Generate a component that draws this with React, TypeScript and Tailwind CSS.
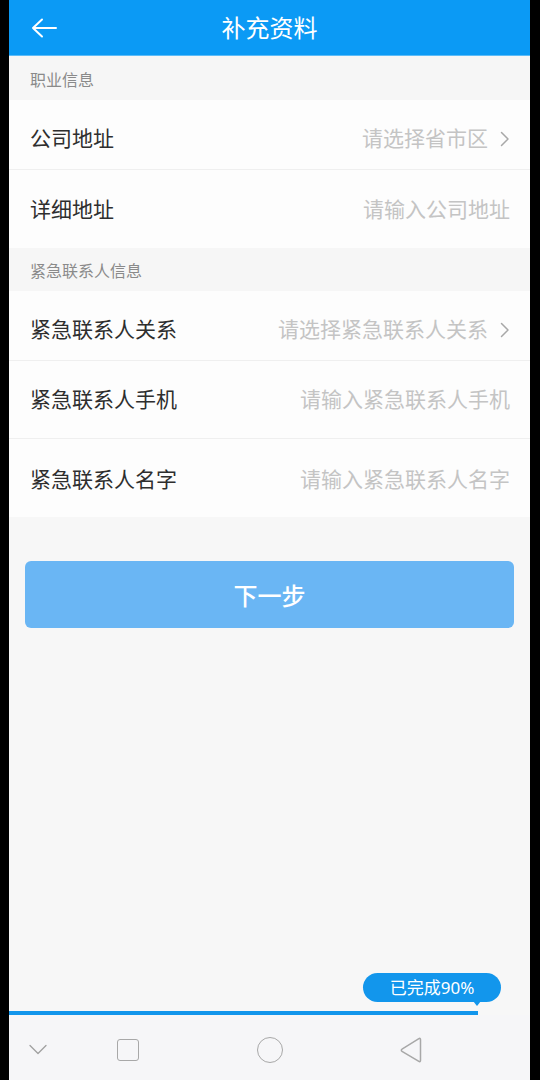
import React from 'react';

// Supplementary info form: occupation address + emergency contact, with a progress badge.

type Field = {
  label: string;
  placeholder: string;
  select?: boolean;
  height: string;
};

const workFields: Field[] = [
  { label: '公司地址', placeholder: '请选择省市区', select: true, height: 'h-[70px] pt-[8px]' },
  { label: '详细地址', placeholder: '请输入公司地址', height: 'h-[78px]' },
];

const contactFields: Field[] = [
  { label: '紧急联系人关系', placeholder: '请选择紧急联系人关系', select: true, height: 'h-[70px] pt-[8px]' },
  { label: '紧急联系人手机', placeholder: '请输入紧急联系人手机', height: 'h-[78px]' },
  { label: '紧急联系人名字', placeholder: '请输入紧急联系人名字', height: 'h-[78px] pt-[2px]' },
];

function Chevron() {
  return (
    <svg width="10" height="16" viewBox="0 0 10 16" fill="none" className="ml-[12px]">
      <path d="M1.5 1.5L8 8l-6.5 6.5" stroke="#a8a8a8" strokeWidth="1.5" strokeLinecap="round" strokeLinejoin="round" />
    </svg>
  );
}

function SectionTitle({ children, height }: { children: React.ReactNode; height: string }) {
  return (
    <div className={`${height} flex items-center bg-[#f6f6f6] pl-[21px] pt-[3px] text-[16px] leading-none text-[#8a8a8a]`}>
      {children}
    </div>
  );
}

function FieldGroup({ fields }: { fields: Field[] }) {
  return (
    <div className="bg-[#fdfdfd]">
      {fields.map((f, i) => (
        <div
          key={f.label}
          className={`${f.height} flex items-center justify-between pl-[21px] pr-[20px] ${
            i < fields.length - 1 ? 'border-b border-[#efefef]' : ''
          }`}
        >
          <span className="text-[21px] leading-none text-[#2e2e2e]">{f.label}</span>
          <span className="flex items-center">
            <span className="text-[21px] leading-none text-[#c4c4c4]">{f.placeholder}</span>
            {f.select && <Chevron />}
          </span>
        </div>
      ))}
    </div>
  );
}

export default function App() {
  return (
    <div className="flex h-[1080px] w-[540px] bg-black pl-[9px] pr-[10px] font-['Noto_Sans','Noto_Sans_CJK_SC',sans-serif]">
      <div className="flex w-[521px] flex-col bg-[#f7f7f7]">
        {/* Header */}
        <div className="relative flex h-[56px] items-center justify-center border-b border-[#5cbcf8] bg-[#0b9af5]">
          <svg
            width="26"
            height="20"
            viewBox="0 0 26 20"
            fill="none"
            className="absolute left-[22px] top-[18px]"
          >
            <path d="M25 10H2M11 1.5L2 10l9 8.5" stroke="white" strokeWidth="2" strokeLinecap="round" strokeLinejoin="round" />
          </svg>
          <span className="text-[24px] leading-none text-white">补充资料</span>
        </div>

        <SectionTitle height="h-[44px]">职业信息</SectionTitle>
        <FieldGroup fields={workFields} />

        <SectionTitle height="h-[43px]">紧急联系人信息</SectionTitle>
        <FieldGroup fields={contactFields} />

        <div className="px-[16px] pt-[44px]">
          <button
            type="button"
            className="flex h-[67px] w-full items-center justify-center rounded-[6px] bg-[#6ab6f4] pt-[2px] text-[24px] font-medium leading-none text-white"
          >
            下一步
          </button>
        </div>

        <div className="flex-1" />

        {/* Progress badge + bar */}
        <div className="flex flex-col">
          <div className="flex justify-end pr-[29px]">
            <div className="relative flex h-[29px] w-[138px] items-center justify-center rounded-full bg-[#1296ec] text-[17px] leading-none text-white">
              已完成90%
              <span className="absolute bottom-[-4px] right-[20px] h-0 w-0 border-x-[4px] border-t-[5px] border-x-transparent border-t-[#1296ec]" />
            </div>
          </div>
          <div className="mt-[9px] h-[4px] w-[469px] bg-[#1296ec]" />
        </div>

        {/* System nav bar */}
        <div className="flex h-[65px] items-center bg-[#f6f6f8] pt-[4px]">
          <div className="flex w-full items-center">
            <div className="flex w-[58px] justify-center">
              <svg width="18" height="11" viewBox="0 0 18 11" fill="none">
                <path d="M1 1.5l8 8 8-8" stroke="#a0a0a0" strokeWidth="1.3" strokeLinecap="round" strokeLinejoin="round" />
              </svg>
            </div>
            <div className="ml-[50px] flex w-[22px] justify-center">
              <div className="h-[22px] w-[22px] rounded-[3px] border-[1.5px] border-[#a8a8a8]" />
            </div>
            <div className="ml-[118px] flex justify-center">
              <div className="h-[26px] w-[26px] rounded-full border-[1.5px] border-[#a8a8a8]" />
            </div>
            <div className="ml-[116px] flex justify-center">
              <svg width="24" height="26" viewBox="0 0 24 26" fill="none">
                <path
                  d="M21.5 2.5v21c0 1-.8 1.4-1.6.9L3 14.3c-.9-.5-.9-1.7 0-2.2L19.9 1.6c.8-.5 1.6-.1 1.6.9z"
                  stroke="#a8a8a8"
                  strokeWidth="1.5"
                  strokeLinejoin="round"
                />
              </svg>
            </div>
          </div>
        </div>
      </div>
    </div>
  );
}
